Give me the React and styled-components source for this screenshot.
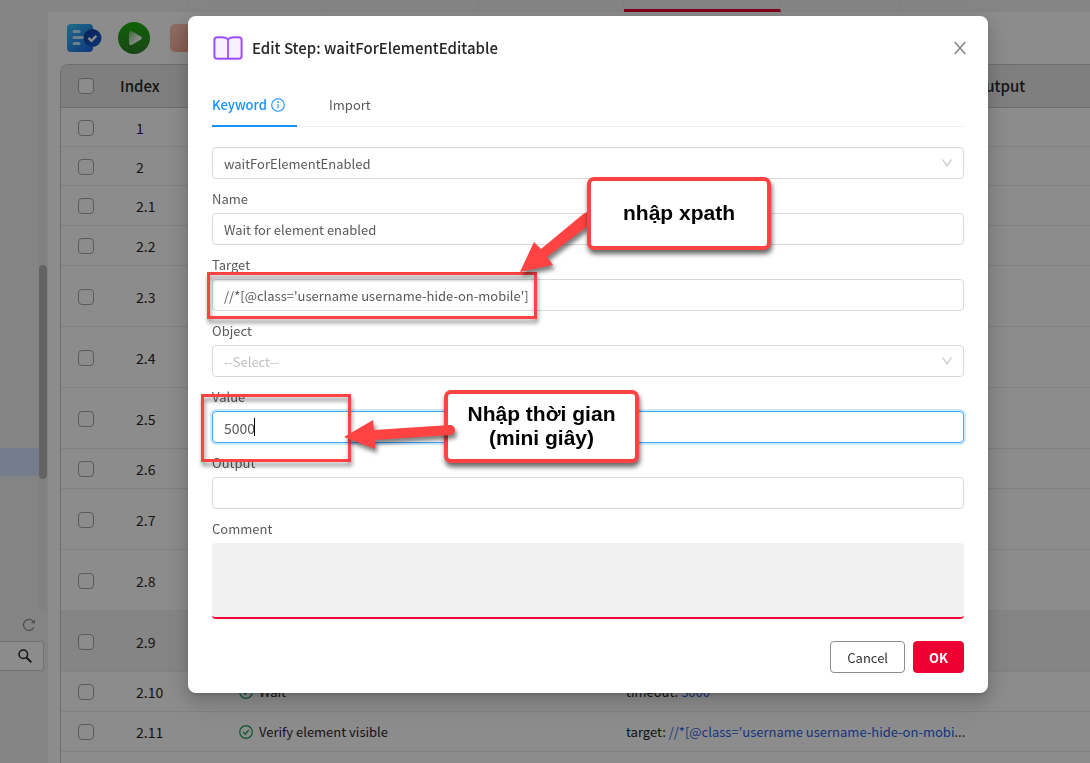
import React from "react";
import styled, { createGlobalStyle } from "styled-components";

const GlobalStyle = createGlobalStyle`
  * { box-sizing: border-box; }
  html, body { margin: 0; padding: 0; }
  body {
    font-family: "Noto Sans CJK JP", "Noto Sans", sans-serif;
    font-size: 13px;
    line-height: 22px;
    color: #262626;
    background: #fff;
  }
  button, input, select, textarea { font: inherit; color: inherit; }
`;

/* ---------- page behind the dialog ---------- */

const Page = styled.div`
  position: relative;
  display: flex;
  height: 100vh;
  overflow: hidden;
`;

const Sidebar = styled.aside`
  flex: none;
  display: flex;
  flex-direction: column;
  width: 48px;
  padding-top: 40px;
  background: #f0f0f0;
`;

const Tree = styled.div`
  display: flex;
  height: 570px;
`;

const TreeList = styled.div`
  flex: 1;
  padding-top: 408px;
`;

const TreeSelection = styled.div`
  height: 28px;
  background: #d5e3ff;
`;

const ScrollTrack = styled.div`
  width: 8px;
  margin-right: 1px;
  padding-top: 225px;
  background: #ebebeb;
`;

const ScrollThumb = styled.div`
  height: 214px;
  border-radius: 4px;
  background: #b4b4b4;
`;

const RefreshButton = styled.button`
  align-self: flex-end;
  display: flex;
  margin: 8px 12px 9px 0;
  padding: 0;
  border: 0;
  background: none;
  color: #8c8c8c;
`;

const SearchBox = styled.div`
  display: flex;
  align-items: center;
  justify-content: flex-end;
  height: 30px;
  margin-right: 4px;
  padding-right: 10px;
  border: 1px solid #d0d0d0;
  border-left: 0;
  border-radius: 0 4px 4px 0;
  background: #fff;
`;

const Main = styled.main`
  flex: 1;
  min-width: 0;
  display: flex;
  flex-direction: column;
`;

const FileTabs = styled.nav`
  flex: none;
  display: flex;
  height: 12px;
  background: #f3f3f3;
`;

const FileTab = styled.div`
  width: ${(p) => p.$width}px;
  border-right: 1px solid #ebebeb;
  border-bottom: ${(p) => (p.$active ? "3px solid #ee0033" : "0")};
`;

const Toolbar = styled.div`
  flex: none;
  display: flex;
  align-items: center;
  gap: 16px;
  height: 52px;
  padding-left: 18px;
`;

const ToolButton = styled.button`
  display: flex;
  padding: 0;
  border: 0;
  background: none;
`;

const TableFrame = styled.div`
  flex: 1;
  margin-left: 12px;
  border: 1px solid #c9c9c9;
  border-width: 1px 0 0 1px;
  border-radius: 8px 0 0 0;
  overflow: hidden;
`;

const StepTable = styled.table`
  width: 100%;
  border-collapse: separate;
  border-spacing: 0;
  table-layout: fixed;
`;

const HeadCell = styled.th`
  width: ${(p) => (p.$width ? p.$width + "px" : "auto")};
  height: 43px;
  padding: 0 0 0 ${(p) => p.$pad || 8}px;
  border-bottom: 1px solid #c9c9c9;
  background: #e8e8e8;
  text-align: left;
  font-size: 15px;
  font-weight: 500;
`;

const Row = styled.tr`
  height: ${(p) => p.$height}px;
  background: ${(p) => (p.$shaded ? "#f3f3f3" : "#fff")};
`;

const Cell = styled.td`
  padding: 1px 0 0 ${(p) => p.$pad || 8}px;
  border-bottom: 1px solid #ebebeb;
  font-size: ${(p) => (p.$numeric ? 14 : 13)}px;
  white-space: nowrap;
`;

const Check = styled.input`
  appearance: none;
  display: block;
  width: 16px;
  height: 16px;
  margin: 0;
  border: 1px solid #a6a6a6;
  border-radius: 4px;
  background: #fff;
`;

const ActionName = styled.span`
  display: flex;
  align-items: center;
  gap: 6px;
`;

const ParamValue = styled.span`
  color: #2a5fe0;
`;

/* ---------- dialog ---------- */

const Mask = styled.div`
  position: fixed;
  inset: 0;
  padding: 16px 102px 0 188px;
  background: rgba(0, 0, 0, 0.45);
`;

const Dialog = styled.section`
  position: relative;
  padding: 20px 24px;
  border-radius: 8px;
  background: #fff;
  box-shadow: 0 3px 6px -4px rgba(0, 0, 0, 0.3), 0 6px 16px rgba(0, 0, 0, 0.16),
    0 9px 28px 8px rgba(0, 0, 0, 0.08);
`;

const DialogHeader = styled.header`
  display: flex;
  align-items: center;
  gap: 8px;
  height: 24px;
`;

const DialogTitle = styled.h2`
  flex: 1;
  margin: 0;
  font-size: 15px;
  line-height: 24px;
  font-weight: 500;
`;

const CloseButton = styled.button`
  display: flex;
  margin-right: -4px;
  padding: 0;
  border: 0;
  background: none;
  color: #808080;
`;

const Tabs = styled.div`
  display: flex;
  gap: 32px;
  height: 49px;
  margin: 18px 0 20px;
  border-bottom: 1px solid #f0f0f0;
`;

const Tab = styled.button`
  display: flex;
  align-items: center;
  gap: 4px;
  height: 49px;
  padding: 6px ${(p) => (p.$active ? 12 : 0)}px 0 0;
  border: 0;
  border-bottom: 2px solid ${(p) => (p.$active ? "#1890ff" : "transparent")};
  background: none;
  color: ${(p) => (p.$active ? "#1890ff" : "#595959")};
  font-weight: ${(p) => (p.$active ? 500 : 400)};
`;

const Label = styled.label`
  display: block;
  padding: 9px 0 3px;
  color: #595959;
`;

const Control = styled.div`
  position: relative;
`;

const fieldLook = `
  display: block;
  width: 100%;
  height: 32px;
  padding: 1px 11px 0;
  border: 1px solid #d9d9d9;
  border-radius: 4px;
  background: #fff;
  outline: none;
`;

const TextInput = styled.input`
  ${fieldLook}
  color: #595959;
  font-size: ${(p) => (p.$numeric ? 14 : 13)}px;
  border-color: ${(p) => (p.$focused ? "#40a9ff" : "#d9d9d9")};
  box-shadow: ${(p) => (p.$focused ? "0 0 0 2px rgba(24, 144, 255, 0.2)" : "none")};
`;

const Select = styled.select`
  ${fieldLook}
  appearance: none;
  color: ${(p) => (p.$empty ? "#bfbfbf" : "#595959")};
`;

const Chevron = styled.svg`
  position: absolute;
  right: 11px;
  top: 10px;
  pointer-events: none;
`;

const Caret = styled.span`
  position: absolute;
  left: 42px;
  top: 7px;
  width: 1px;
  height: 18px;
  background: #000;
`;

const CommentBox = styled.textarea`
  display: block;
  width: 100%;
  height: 76px;
  padding: 8px 11px;
  border: 0;
  border-bottom: 2px solid #ee0033;
  border-radius: 4px;
  background: #f1f1f1;
  outline: none;
  resize: none;
`;

const DialogFooter = styled.footer`
  display: flex;
  justify-content: flex-end;
  gap: 8px;
  margin-top: 22px;
`;

const Button = styled.button`
  height: 32px;
  padding: 1px ${(p) => (p.$primary ? 15 : 16)}px 0;
  border: 1px solid ${(p) => (p.$primary ? "#ee0033" : "#8c8c8c")};
  border-radius: 4px;
  background: ${(p) => (p.$primary ? "#ee0033" : "#fff")};
  color: ${(p) => (p.$primary ? "#fff" : "#333")};
  font-weight: ${(p) => (p.$primary ? 700 : 400)};
`;

/* ---------- annotations drawn over the dialog ---------- */

const Marker = styled.div`
  position: absolute;
  left: ${(p) => p.$x}px;
  top: ${(p) => p.$y}px;
  width: ${(p) => p.$w}px;
  height: ${(p) => p.$h}px;
  border: 3px solid #ff4343;
  filter: drop-shadow(1px 4px 2px rgba(0, 0, 0, 0.45));
  pointer-events: none;
`;

const Callout = styled.div`
  position: absolute;
  left: ${(p) => p.$x}px;
  top: ${(p) => p.$y}px;
  width: ${(p) => p.$w}px;
  height: 73px;
  display: flex;
  flex-direction: column;
  align-items: center;
  padding-top: ${(p) => p.$top}px;
  border: 4px solid #ff4343;
  border-radius: 7px;
  background: #fff;
  box-shadow: 1px 4px 5px rgba(0, 0, 0, 0.6);
  color: #000;
  font: bold 21px/24px "Liberation Sans", Arial, sans-serif;
  white-space: nowrap;
`;

const Arrow = styled.svg`
  position: absolute;
  left: ${(p) => p.$x}px;
  top: ${(p) => p.$y}px;
  overflow: visible;
  filter: drop-shadow(2px 4px 2px rgba(0, 0, 0, 0.5));
  pointer-events: none;
`;

const files = [
  { width: 140 },
  { width: 138 },
  { width: 153 },
  { width: 145 },
  { width: 157, active: true },
  { width: 119 },
];

const steps = [
  { index: "1", height: 39 },
  { index: "2", height: 39 },
  { index: "2.1", height: 40 },
  { index: "2.2", height: 40 },
  { index: "2.3", height: 61 },
  { index: "2.4", height: 61 },
  { index: "2.5", height: 61 },
  { index: "2.6", height: 40 },
  { index: "2.7", height: 61 },
  { index: "2.8", height: 61 },
  { index: "2.9", height: 61, shaded: true },
  { index: "2.10", height: 40, action: "Wait", param: "timeout", value: "5000" },
  {
    index: "2.11",
    height: 40,
    action: "Verify element visible",
    param: "target",
    value: "//*[@class='username username-hide-on-mobi",
    more: "...",
  },
  { index: "", height: 40 },
];

const DocIcon = () => (
  <svg width="36" height="32" viewBox="0 0 36 32" aria-hidden="true">
    <defs>
      <linearGradient id="doc" x1="0" y1="0" x2="1" y2="1">
        <stop offset="0" stopColor="#36c5f8" />
        <stop offset="1" stopColor="#1c62e0" />
      </linearGradient>
      <linearGradient id="badge" x1="0" y1="0" x2="1" y2="1">
        <stop offset="0" stopColor="#0a3d99" />
        <stop offset="1" stopColor="#1a62d8" />
      </linearGradient>
    </defs>
    <rect x="1" y="2" width="26" height="28" rx="4" fill="url(#doc)" />
    <g stroke="#c3e8ff" strokeWidth="3" strokeLinecap="round">
      <path d="M8 9.500h5M8 15.500h10M8 21.500h5" />
    </g>
    <circle cx="26.500" cy="16" r="9" fill="url(#badge)" />
    <path d="M22.500 16l3 2.800 4.800-5" fill="none" stroke="#fff" strokeWidth="2.400" />
  </svg>
);

const PlayIcon = () => (
  <svg width="32" height="32" viewBox="0 0 32 32" aria-hidden="true">
    <defs>
      <linearGradient id="play" x1="0" y1="0" x2="0" y2="1">
        <stop offset="0" stopColor="#1cb30c" />
        <stop offset="1" stopColor="#2f7f28" />
      </linearGradient>
      <linearGradient id="tri" x1="0" y1="0" x2="1" y2="1">
        <stop offset="0" stopColor="#6fbf66" />
        <stop offset="0.700" stopColor="#fff" />
      </linearGradient>
    </defs>
    <circle cx="16" cy="16" r="16" fill="url(#play)" />
    <path
      d="M11 11.200c0-1.700 1.600-2.700 3.100-2l8.700 5.300c1.300.8 1.300 2.200 0 3l-8.700 5.300c-1.500.8-3.100-.2-3.100-1.900z"
      fill="url(#tri)"
    />
  </svg>
);

const StopIcon = () => (
  <svg width="32" height="28" viewBox="0 0 32 28" aria-hidden="true">
    <defs>
      <linearGradient id="stop" x1="0" y1="0" x2="1" y2="1">
        <stop offset="0" stopColor="#ffcbbd" />
        <stop offset="1" stopColor="#f59a80" />
      </linearGradient>
    </defs>
    <rect x="4" width="28" height="28" rx="5" fill="url(#stop)" />
  </svg>
);

const BookIcon = () => {
  const cover =
    "M16 4.500C14.800 3 13 2.300 10.500 2.300H5.500C3.400 2.300 2.500 3.300 2.500 5v16c0 1.800.9 2.700 3 2.700h21c2.100 0 3-.9 3-2.700V5c0-1.700-.9-2.700-3-2.700h-5C19 2.300 17.200 3 16 4.500zM16 4.500v19";
  return (
    <svg width="32" height="26" viewBox="0 0 32 26" aria-hidden="true">
      <path d={cover} fill="none" stroke="#e3ccff" strokeWidth="3" strokeLinejoin="round" />
      <path d={cover} fill="#f6efff" stroke="#9747ff" strokeWidth="1.700" strokeLinejoin="round" />
    </svg>
  );
};

const InfoIcon = () => (
  <svg width="14" height="14" viewBox="0 0 14 14" aria-hidden="true">
    <circle cx="7" cy="7" r="6.300" fill="none" stroke="#1890ff" strokeWidth="1.100" />
    <path d="M7 6v4.500" stroke="#1890ff" strokeWidth="1.100" />
    <circle cx="7" cy="4" r="0.900" fill="#1890ff" />
  </svg>
);

const CheckIcon = () => (
  <svg width="14" height="14" viewBox="0 0 14 14" fill="none" stroke="#1c9a5b" aria-hidden="true">
    <circle cx="7" cy="7" r="6.300" strokeWidth="1.200" />
    <path d="M4.300 7l2 2.200 3.500-4.400" strokeWidth="1.200" />
  </svg>
);

const CloseIcon = () => (
  <svg width="16" height="16" viewBox="0 0 16 16" aria-hidden="true">
    <path d="M2.800 2l10.400 12M13.200 2l-10.400 12" stroke="currentColor" strokeWidth="1.400" />
  </svg>
);

const RefreshIcon = () => (
  <svg width="14" height="14" viewBox="0 0 14 14" fill="none" stroke="currentColor" aria-hidden="true">
    <path d="M12 9.200a5.500 5.500 0 1 1-.6-5.600" strokeWidth="1.200" />
    <path d="M12.400 1.800v2.800h-2.800" strokeWidth="1.200" />
  </svg>
);

const SearchIcon = () => (
  <svg width="16" height="16" viewBox="0 0 16 16" fill="none" stroke="#222" aria-hidden="true">
    <circle cx="6.300" cy="6.300" r="4.300" strokeWidth="1.500" />
    <path d="M9.500 9.500l4.800 4.800" strokeWidth="1.800" />
  </svg>
);

const DownIcon = () => (
  <Chevron width="12" height="12" viewBox="0 0 12 12" aria-hidden="true">
    <path d="M1.500 2.500L6 8.800l4.500-6.300" fill="none" stroke="#bfbfbf" strokeWidth="1.100" />
  </Chevron>
);

function StepRow({ step }) {
  return (
    <Row $height={step.height} $shaded={step.shaded}>
      <Cell $pad={17}>
        <Check type="checkbox" aria-label={"Select step " + step.index} />
      </Cell>
      <Cell $pad={24} $numeric>
        {step.index}
      </Cell>
      <Cell>
        {step.action && (
          <ActionName>
            <CheckIcon />
            {step.action}
          </ActionName>
        )}
      </Cell>
      <Cell>
        {step.param && (
          <>
            {step.param}: <ParamValue>{step.value}</ParamValue>
            {step.more}
          </>
        )}
      </Cell>
      <Cell />
    </Row>
  );
}

export default function App() {
  return (
    <>
      <GlobalStyle />
      <Page>
        <Sidebar>
          <Tree>
            <TreeList>
              <TreeSelection />
            </TreeList>
            <ScrollTrack>
              <ScrollThumb />
            </ScrollTrack>
          </Tree>
          <RefreshButton type="button" aria-label="Refresh">
            <RefreshIcon />
          </RefreshButton>
          <SearchBox>
            <SearchIcon />
          </SearchBox>
        </Sidebar>
        <Main>
          <FileTabs>
            {files.map((file, i) => (
              <FileTab key={i} $width={file.width} $active={file.active} />
            ))}
          </FileTabs>
          <Toolbar>
            <ToolButton type="button" aria-label="Test cases">
              <DocIcon />
            </ToolButton>
            <ToolButton type="button" aria-label="Run">
              <PlayIcon />
            </ToolButton>
            <ToolButton type="button" aria-label="Stop">
              <StopIcon />
            </ToolButton>
          </Toolbar>
          <TableFrame>
            <StepTable>
              <thead>
                <tr>
                  <HeadCell $width={51} $pad={17}>
                    <Check type="checkbox" aria-label="Select all steps" />
                  </HeadCell>
                  <HeadCell $width={119}>Index</HeadCell>
                  <HeadCell $width={387} />
                  <HeadCell $width={348} />
                  <HeadCell>Output</HeadCell>
                </tr>
              </thead>
              <tbody>
                {steps.map((step, i) => (
                  <StepRow key={i} step={step} />
                ))}
              </tbody>
            </StepTable>
          </TableFrame>
        </Main>
      </Page>

      <Mask>
        <Dialog role="dialog" aria-labelledby="dialog-title">
          <DialogHeader>
            <BookIcon />
            <DialogTitle id="dialog-title">Edit Step: waitForElementEditable</DialogTitle>
            <CloseButton type="button" aria-label="Close">
              <CloseIcon />
            </CloseButton>
          </DialogHeader>
          <Tabs role="tablist">
            <Tab type="button" role="tab" aria-selected="true" $active>
              Keyword
              <InfoIcon />
            </Tab>
            <Tab type="button" role="tab" aria-selected="false">
              Import
            </Tab>
          </Tabs>

          <Control>
            <Select aria-label="Keyword" defaultValue="waitForElementEnabled">
              <option>waitForElementEnabled</option>
            </Select>
            <DownIcon />
          </Control>

          <Label htmlFor="name">Name</Label>
          <TextInput id="name" defaultValue="Wait for element enabled" />

          <Label htmlFor="target">Target</Label>
          <TextInput
            id="target"
            defaultValue="//*[@class='username username-hide-on-mobile']"
          />

          <Label htmlFor="object">Object</Label>
          <Control>
            <Select id="object" $empty defaultValue="--Select--">
              <option>--Select--</option>
            </Select>
            <DownIcon />
          </Control>

          <Label htmlFor="value">Value</Label>
          <Control>
            <TextInput id="value" $focused $numeric defaultValue="5000" />
            <Caret />
          </Control>

          <Label htmlFor="output">Output</Label>
          <TextInput id="output" />

          <Label htmlFor="comment">Comment</Label>
          <CommentBox id="comment" />

          <DialogFooter>
            <Button type="button">Cancel</Button>
            <Button type="button" $primary>
              OK
            </Button>
          </DialogFooter>

          <Marker $x={19} $y={256} $w={330} $h={47} />
          <Marker $x={13} $y={378} $w={150} $h={68} />
          <Arrow $x={332} $y={192} width="76" height="64" viewBox="0 0 76 64">
            <path
              d="M0 64L14 34l7 7L62 7c5-4 10-4 14 1l-4 7L27 49l6 8z"
              fill="#ff4343"
            />
          </Arrow>
          <Callout $x={399} $y={161} $w={184} $top={20}>
            nhập xpath
          </Callout>
          <Callout $x={256} $y={374} $w={195} $top={8}>
            <span>Nhập thời gian</span>
            <span>(mini giây)</span>
          </Callout>
          <Arrow $x={156} $y={404} width="112" height="30" viewBox="0 0 112 30">
            <path
              d="M0 17L29 0l1 10 76-5a5 5 0 0 1 0 10L31 20v9z"
              fill="#ff4343"
            />
          </Arrow>
        </Dialog>
      </Mask>
    </>
  );
}
